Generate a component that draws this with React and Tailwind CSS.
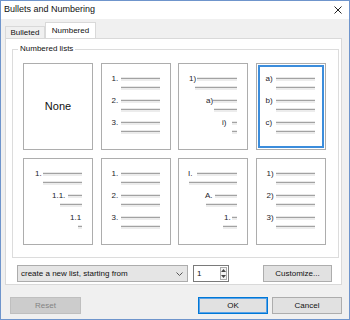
import React from "react";

const Line = ({ cls = "" }) => (
  <div
    className={`h-[4px] bg-[linear-gradient(#e8e8e8_0_1px,#a2a2a2_1px_2px,#ececec_2px)] ${cls}`}
  />
);

function Item({ label, pad, lw, sub, line = true }) {
  return (
    <div className="flex flex-col gap-[1px]">
      <div className={`flex items-center h-[12px] ${pad}`}>
        <span className={`shrink-0 whitespace-nowrap text-[8px] leading-none text-[#1c1c2c] ${lw}`}>
          {label}
        </span>
        {line && <Line cls="flex-1" />}
      </div>
      <div className={sub}>
        <Line />
      </div>
    </div>
  );
}

function Cell({ children, selected }) {
  return (
    <div
      className={`h-[87px] border border-[#adadad] bg-white pt-[9px] pr-[10px] flex flex-col gap-[5px] ${
        selected ? "shadow-[inset_0_0_0_1px_#ffffff,inset_0_0_0_3px_#3c8ddc]" : ""
      }`}
    >
      {children}
    </div>
  );
}

function Simple({ labels, selected }) {
  return (
    <Cell selected={selected}>
      {labels.map((l) => (
        <Item
          key={l}
          label={l}
          pad={selected ? "pl-[9px]" : "pl-[10px]"}
          lw={selected ? "w-[10px]" : "w-[9px]"}
          sub="pl-[19px]"
        />
      ))}
    </Cell>
  );
}

export default function App() {
  return (
    <div className="w-[350px] h-[320px] border border-[#6f95cc] bg-[#f0f0f0] flex flex-col font-['Liberation_Sans',Arial,sans-serif] text-[8px] text-[#111] overflow-hidden">
      {/* title bar */}
      <div className="h-[18px] shrink-0 bg-white flex items-center justify-between pl-[3px] pr-[7px]">
        <span className="text-[9px]">Bullets and Numbering</span>
        <svg width="8" height="8" viewBox="0 0 8 8">
          <path d="M0.5 0.5 L7.5 7.5 M7.5 0.5 L0.5 7.5" stroke="#222" strokeWidth="1" />
        </svg>
      </div>

      {/* tabs */}
      <div className="flex pl-[4px] pt-[3px] shrink-0">
        <div className="mt-[4px] h-[12px] w-[40px] border border-b-0 border-[#d9d9d9] bg-[#f0f0f0] flex items-center justify-center text-[8px]">
          Bulleted
        </div>
        <div className="h-[16px] w-[51px] border border-b-0 border-[#d9d9d9] bg-white flex items-center justify-center text-[8px] relative z-10 -mb-[1px]">
          Numbered
        </div>
      </div>

      {/* panel */}
      <div className="ml-[4px] mr-[7px] h-[247px] border border-[#d9d9d9] bg-white flex flex-col shrink-0">
        <fieldset className="ml-[6px] mr-[3px] mt-[4px] border border-[#dcdcdc] pl-[10px] pr-[12px] pt-[8px] pb-[12px]">
          <legend className="-ml-[5px] px-[2px] text-[8px] leading-[12px]">Numbered lists</legend>
          <div className="grid grid-cols-[70px_70px_70px_70px] gap-x-[7.5px] gap-y-[8px]">
            <div className="h-[87px] border border-[#adadad] bg-white flex items-center justify-center text-[11px] text-[#111]">
              None
            </div>
            <Simple labels={["1.", "2.", "3."]} />
            <Cell>
              <Item label="1)" pad="pl-[10px]" lw="w-[8px]" sub="pl-[16px]" />
              <Item label="a)" pad="pl-[27px]" lw="w-[7px]" sub="pl-[35px]" />
              <Item label="i)" pad="pl-[43px]" lw="w-[10px]" sub="pl-[53px]" />
            </Cell>
            <Simple labels={["a)", "b)", "c)"]} selected />

            <Cell>
              <Item label="1." pad="pl-[11px]" lw="w-[8px]" sub="pl-[19px]" />
              <Item label="1.1." pad="pl-[28px]" lw="w-[16px]" sub="pl-[36px]" />
              <Item label="1.1" pad="pl-[46px]" lw="w-[10px]" sub="pl-[54px]" line={false} />
            </Cell>
            <Simple labels={["1.", "2.", "3."]} />
            <Cell>
              <Item label="I." pad="pl-[9px]" lw="w-[9px]" sub="pl-[10px]" />
              <Item label="A." pad="pl-[26px]" lw="w-[10px]" sub="pl-[27px]" />
              <Item label="1." pad="pl-[45px]" lw="w-[8px]" sub="pl-[44px]" />
            </Cell>
            <Simple labels={["1)", "2)", "3)"]} />
          </div>
        </fieldset>

        {/* list options row */}
        <div className="flex items-center mt-[7px] pl-[11px]">
          <div className="w-[171px] h-[17px] border border-[#acacac] bg-[#e5e5e5] flex items-center justify-between pl-[3px] pr-[4px]">
            <span className="text-[8px] whitespace-nowrap">create a new list, starting from</span>
            <svg width="7" height="4" viewBox="0 0 7 4">
              <path d="M0.5 0.5 L3.5 3.5 L6.5 0.5" fill="none" stroke="#555" strokeWidth="1" />
            </svg>
          </div>
          <div className="ml-[5px] w-[36px] h-[17px] border border-[#7a7a7a] bg-white flex items-center justify-between pl-[3px] pr-[1px]">
            <span className="text-[8px]">1</span>
            <div className="w-[7px] h-[13px] border border-[#acacac] bg-[#f4f4f4] flex flex-col items-center justify-around">
              <svg width="5" height="3" viewBox="0 0 5 3"><path d="M0 3 L2.5 0 L5 3 Z" fill="#444" /></svg>
              <svg width="5" height="3" viewBox="0 0 5 3"><path d="M0 0 L2.5 3 L5 0 Z" fill="#444" /></svg>
            </div>
          </div>
          <button className="ml-[34px] w-[69px] h-[17px] border border-[#adadad] bg-[#e1e1e1] text-[8px] flex items-center justify-center">
            Customize...
          </button>
        </div>
      </div>

      {/* bottom buttons */}
      <div className="flex items-center mt-[12px] pl-[9px] pr-[7px]">
        <button className="w-[71px] h-[17px] border border-[#bfbfbf] bg-[#cccccc] text-[#838383] text-[8px] flex items-center justify-center">
          Reset
        </button>
        <button className="ml-auto w-[70px] h-[17px] border border-[#0078d7] shadow-[inset_0_0_0_1px_#5aa2e6] bg-[#e1e1e1] text-[8px] flex items-center justify-center">
          OK
        </button>
        <button className="ml-[4px] w-[70px] h-[17px] border border-[#adadad] bg-[#e1e1e1] text-[8px] flex items-center justify-center">
          Cancel
        </button>
      </div>
    </div>
  );
}
